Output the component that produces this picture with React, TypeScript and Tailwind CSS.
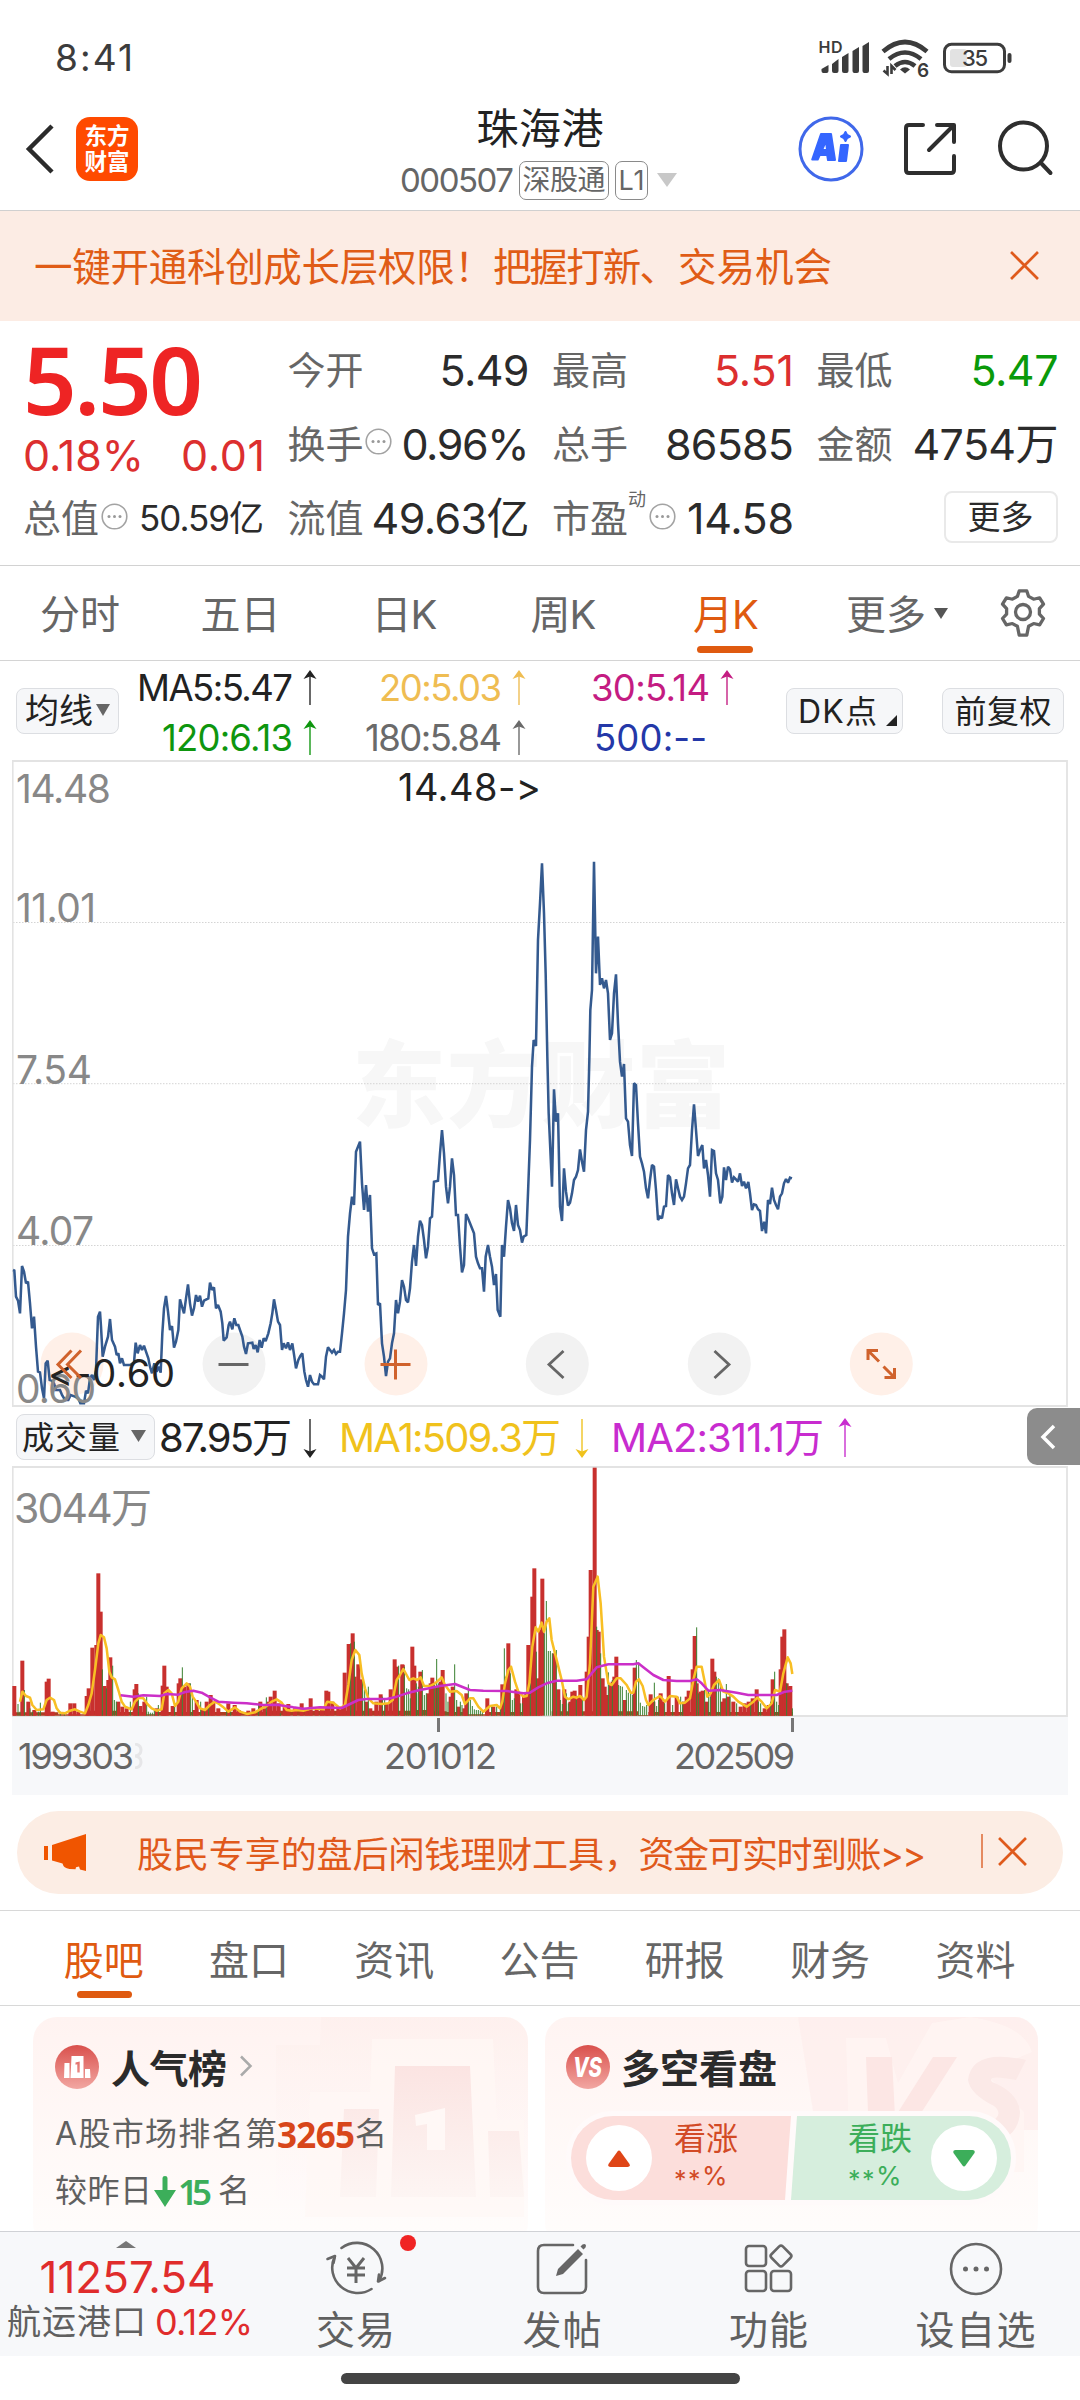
import { useLayoutEffect, useRef, useState, type ReactNode } from "react";

/** Single-line text whose tracking is adjusted so that it fills a given width. */
function Fit({ w, className = "", children }: { w: number; className?: string; children: string }) {
  const ref = useRef<HTMLSpanElement>(null);
  const [spacing, setSpacing] = useState(0);
  useLayoutEffect(() => {
    const el = ref.current;
    if (!el) return;
    const natural = el.getBoundingClientRect().width - spacing * children.length;
    setSpacing(children.length > 1 ? (w - natural) / (children.length - 1) : 0);
  }, [w, children]);
  return (
    <span className={`inline-block shrink-0 whitespace-nowrap leading-none ${className}`} style={{ width: w }}>
      <span ref={ref} style={{ letterSpacing: spacing }}>
        {children}
      </span>
    </span>
  );
}

const PRICE =
  "39,660 43,662 48,740 54,752 60,790 66,648 72,665 78,700 84,695 90,760 96,835 102,800 108,890 114,965 120,967 126,1015 132,1045 137,940 143,932 149,990 155,992 162,1000 168,1020 180,1020 186,1035 195,1050 205,1050 212,1035 225,1040 235,1045 241,1060 252,1060 258,1022 264,1030 270,985 276,975 282,990 288,960 294,800 300,785 303,830 308,920 315,890 324,860 330,807 336,870 345,890 350,915 355,910 360,940 366,925 372,945 390,945 402,938 407,878 413,910 420,885 426,900 432,887 438,905 445,925 450,950 456,970 463,940 470,965 476,950 482,968 487,850 492,775 498,738 504,785 510,840 516,828 522,893 528,875 535,840 540,748 546,770 552,790 558,745 564,703 570,760 576,797 582,775 588,735 594,755 600,737 606,770 612,752 625,745 630,698 636,720 642,712 648,775 654,765 662,785 667,820 671,872 680,862 686,825 690,815 697,838 703,805 709,825 715,825 720,840 727,860 732,890 738,912 744,880 757,878 761,897 767,885 773,907 779,870 785,893 791,865 797,873 805,850 812,820 817,790 822,748 828,780 834,815 840,825 846,900 851,880 858,895 864,877 870,900 877,880 883,920 888,955 895,930 901,918 907,910 913,965 918,990 924,1010 930,975 936,995 942,1003 954,1003 960,975 966,980 972,988 978,920 984,892 990,900 996,908 1002,900 1008,912 1014,905 1020,905 1026,850 1032,790 1038,720 1044,560 1050,490 1056,440 1062,465 1068,305 1074,290 1080,275 1086,400 1092,480 1098,405 1104,485 1110,435 1116,595 1122,613 1129,610 1134,765 1140,760 1146,880 1152,920 1158,978 1164,935 1170,925 1176,880 1182,850 1188,750 1194,790 1200,755 1206,690 1212,710 1218,750 1224,757 1230,715 1236,635 1242,585 1248,648 1254,560 1260,512 1266,525 1272,570 1278,625 1284,590 1290,505 1296,500 1302,395 1314,392 1320,310 1326,240 1332,310 1338,410 1344,460 1350,410 1356,325 1362,375 1368,495 1374,495 1380,590 1386,667 1392,645 1398,492 1404,505 1410,520 1422,550 1428,620 1434,640 1440,655 1446,655 1452,725 1457,620 1464,585 1470,620 1476,650 1482,705 1488,672 1493,780 1501,800 1506,585 1512,620 1518,530 1524,450 1530,475 1536,520 1542,543 1548,465 1554,525 1560,540 1566,578 1571,560 1579,555 1584,430 1590,270 1596,50 1601,-30 1608,-12 1614,-330 1620,-440 1626,-560 1632,-410 1637,-230 1642,20 1646,190 1656,410 1662,118 1668,215 1674,190 1680,470 1686,513 1692,355 1698,425 1704,467 1710,458 1716,430 1722,390 1728,380 1734,360 1740,298 1746,335 1752,365 1758,240 1764,185 1768,30 1771,-120 1776,-180 1782,-565 1788,-230 1794,-340 1800,-195 1806,-215 1812,-185 1818,-210 1824,-170 1830,-30 1836,-50 1842,-170 1848,-227 1854,-80 1860,35 1866,80 1872,42 1878,205 1884,215 1890,285 1896,318 1902,100 1908,105 1914,220 1920,320 1926,340 1932,365 1938,415 1944,445 1950,390 1956,345 1962,350 1968,420 1974,510 1980,500 1986,505 1992,470 1998,468 2004,375 2010,382 2016,430 2022,465 2028,388 2034,415 2040,440 2046,450 2052,440 2058,400 2064,355 2070,345 2076,240 2082,163 2088,240 2094,318 2100,300 2107,285 2112,355 2118,330 2124,375 2130,440 2136,300 2142,303 2148,370 2154,390 2161,460 2167,440 2172,352 2178,390 2184,350 2190,358 2196,398 2202,382 2208,388 2214,395 2220,370 2226,408 2232,395 2238,415 2245,396 2250,430 2256,480 2262,463 2268,465 2274,478 2280,483 2286,543 2292,515 2298,550 2304,450 2310,462 2316,413 2322,450 2328,465 2334,478 2340,440 2346,430 2352,400 2358,387 2364,398 2370,383 2376,385";

const RED_BARS =
  "43,858 67,782 85,905 103,930 140,845 146,836 158,935 211,910 223,910 235,935 260,888 266,865 277,743 289,735 295,520 302,635 314,858 325,840 331,772 355,905 367,920 380,925 404,868 409,852 421,918 433,905 470,925 488,857 493,797 500,860 518,918 536,850 541,835 553,860 565,850 583,930 590,900 608,930 620,905 632,885 640,905 655,925 685,910 704,915 716,930 745,932 760,925 781,905 793,925 806,905 812,890 824,872 836,910 854,920 865,912 885,925 905,910 920,930 932,895 950,922 966,922 979,872 985,875 997,905 1015,925 1024,920 1034,818 1046,732 1058,700 1064,830 1075,793 1082,838 1099,905 1111,925 1129,905 1142,883 1160,910 1172,868 1184,778 1190,800 1207,793 1237,740 1243,797 1261,815 1285,880 1208,795 1292,850 1297,833 1310,860 1322,845 1328,810 1352,890 1358,860 1375,920 1399,880 1393,925 1462,895 1480,920 1507,853 1525,730 1520,830 1549,868 1555,880 1572,890 1579,880 1585,735 1597,590 1603,505 1613,835 1621,690 1627,536 1663,760 1675,868 1693,868 1711,905 1717,875 1724,872 1735,888 1741,855 1760,815 1766,710 1772,510 1784,203 1790,690 1796,695 1808,835 1814,860 1820,885 1832,855 1838,845 1843,830 1849,770 1875,900 1904,803 1952,883 1960,905 1982,880 1988,905 2006,828 2030,890 2053,905 2060,890 2066,872 2078,808 2084,708 2090,850 2102,875 2108,872 2120,905 2137,776 2143,815 2167,905 2173,895 2185,890 2200,905 2222,920 2234,910 2246,905 2258,895 2270,868 2294,925 2306,915 2318,838 2342,808 2347,710 2353,688 2360,850 2365,860 2371,858";

const GREEN_BARS =
  "54,912 60,935 73,870 90,925 97,935 115,935 121,908 181,935 193,938 307,808 319,865 338,797 343,900 349,905 391,905 415,880 440,890 445,935 451,938 457,938 463,930 475,915 524,910 547,802 571,850 577,890 602,905 614,930 626,915 680,930 692,930 776,910 799,892 841,940 1052,730 1063,725 1088,840 1094,870 1105,860 1147,890 1154,900 1196,797 1213,800 1220,865 1226,868 1231,895 1249,850 1255,860 1267,810 1273,885 1279,880 1250,880 1310,777 1303,850 1315,850 1338,880 1344,905 1364,793 1370,900 1381,905 1386,915 1405,853 1411,900 1417,918 1423,928 1429,930 1435,930 1441,932 1447,934 1475,915 1490,920 1501,918 1513,745 1531,820 1537,900 1543,895 1561,910 1567,910 1591,850 1609,755 1633,700 1639,603 1645,753 1651,753 1657,760 1669,750 1681,900 1687,912 1699,880 1705,910 1729,900 1748,890 1790,680 1802,760 1825,817 1837,840 1856,855 1861,858 1867,860 1879,870 1885,878 1892,880 1898,885 1909,780 1916,790 1921,908 1928,918 1934,920 1940,915 1963,848 1970,918 1976,900 1994,910 2018,915 2042,890 2048,905 2090,682 2096,880 2114,870 2126,870 2131,890 2149,830 2155,835 2161,850 2179,852 2190,885 2210,910 2252,905 2275,905 2282,910 2312,905 2324,815 2330,905 2336,915 2360,850 2377,925";

const VOL_MA1 =
  "60,905 67,875 78,888 90,893 97,915 110,930 130,928 140,900 150,893 162,900 170,925 180,938 195,940 210,932 225,928 240,935 255,940 265,915 275,880 285,810 295,730 302,705 312,712 320,745 328,815 335,832 345,838 355,870 365,905 375,920 395,928 405,905 418,893 430,895 442,912 455,925 470,932 485,928 493,880 505,870 515,880 525,918 535,905 545,865 560,850 570,860 578,890 590,908 600,925 615,930 630,915 645,905 657,912 668,920 685,935 705,922 720,935 742,942 765,937 785,925 800,918 815,905 830,898 845,908 860,930 875,932 890,930 910,932 935,925 970,928 982,905 1000,908 1020,925 1035,915 1045,855 1055,780 1066,750 1078,765 1085,820 1095,865 1105,895 1120,910 1145,912 1165,910 1178,900 1190,840 1200,825 1210,807 1228,840 1240,835 1252,840 1262,832 1272,858 1290,858 1305,850 1325,832 1335,855 1350,875 1370,873 1385,885 1395,912 1410,895 1420,895 1435,920 1450,935 1470,918 1490,915 1500,925 1507,905 1515,850 1525,810 1533,800 1545,845 1555,875 1570,890 1580,888 1588,850 1597,740 1607,682 1615,695 1625,668 1632,695 1640,665 1648,655 1655,720 1665,760 1675,800 1685,840 1695,890 1705,898 1720,890 1730,893 1740,888 1752,900 1760,890 1770,790 1780,560 1793,530 1802,610 1812,770 1825,850 1835,855 1850,835 1862,835 1880,855 1892,878 1900,878 1908,845 1917,838 1928,858 1938,900 1945,915 1960,900 1980,888 1995,905 2010,888 2030,890 2040,910 2055,908 2070,895 2080,840 2090,800 2105,800 2115,850 2122,890 2132,880 2142,855 2157,840 2170,875 2185,880 2200,890 2215,905 2240,920 2260,905 2272,893 2285,905 2300,925 2315,910 2325,870 2340,875 2350,820 2363,772 2372,790 2377,822";

const VOL_MA2 =
  "362,886 400,890 430,886 480,888 500,882 535,884 555,876 580,872 605,878 630,892 655,905 700,908 740,910 790,915 830,914 880,922 910,926 960,922 1025,924 1050,912 1075,900 1100,897 1160,897 1190,890 1220,880 1260,870 1280,866 1320,858 1365,852 1380,858 1410,870 1450,872 1520,873 1570,880 1590,878 1615,862 1640,850 1670,842 1730,842 1760,838 1775,820 1790,802 1825,793 1900,793 1915,790 1930,802 1960,825 1990,840 2030,843 2070,843 2090,838 2105,850 2125,872 2160,870 2210,878 2245,885 2330,885 2355,875 2377,872";

const pairs = (s: string) => s.split(" ").map((p) => p.split(",").map(Number));

function StatusBar() {
  return (
    <div className="flex h-[105px] items-center pt-[10px] pl-[55px] text-[#3c3c3c]">
      <Fit w={78} className="text-[37px]">8:41</Fit>
      <svg className="ml-[683px]" width="56" height="40" viewBox="816 38 56 40" fill="#3c3c3c">
        <text x="818.5" y="53" fontSize="16" fontWeight="600" textLength="24">HD</text>
        <path d="M821.500 69l7-4v6q0 2-2 2h-3q-2 0-2-2zM832 64l6.500-5v12q0 2-2 2h-2.500q-2 0-2-2zM842 57l6.500-4v18q0 2-2 2h-2.500q-2 0-2-2zM852.500 51l6.500-4v24q0 2-2 2h-2.500q-2 0-2-2zM862.500 46l6.500-4v29q0 2-2 2h-2.500q-2 0-2-2z" />
      </svg>
      <svg className="ml-[8px]" width="52" height="50" viewBox="880 33 52 50" fill="none" stroke="#3c3c3c">
        <path d="M883 51.500Q905 32.500 927 51.500" strokeWidth="4.600" />
        <path d="M889 59Q905 46 921 59" strokeWidth="4.600" />
        <path d="M895 66Q905 58 915 66" strokeWidth="4.600" />
        <path d="M900 69.500Q905 65 910 69.500L905 73.500z" fill="#3c3c3c" stroke="none" />
        <path d="M887.500 66v8l-4-3.500M891.500 74v-8l4 4" strokeWidth="2.600" />
        <text x="917" y="76.500" fontSize="19" fontWeight="600" fill="#3c3c3c" stroke="none">6</text>
      </svg>
      <svg className="ml-[8px]" width="76" height="40" viewBox="940 37 76 40">
        <rect x="944.500" y="43.300" width="60" height="27.500" rx="7" fill="none" stroke="#3c3c3c" strokeWidth="3" />
        <rect x="950" y="48" width="17" height="18" rx="3" fill="#e2e2e2" />
        <rect x="1007.500" y="52" width="4" height="10" rx="2" fill="#3c3c3c" />
        <text x="962" y="65" fontSize="22" fontWeight="500" fill="#3c3c3c" textLength="26">35</text>
      </svg>
    </div>
  );
}

function Header() {
  return (
    <header className="flex h-[106px] items-center border-b border-[#d0d0d0] pb-[17px]">
      <svg className="ml-[21px] shrink-0" width="38" height="56" viewBox="20 121 38 56" fill="none" stroke="#2b2b2b" strokeWidth="4.500">
        <path d="M51 126L28 149l23 23" />
      </svg>
      <div className="ml-[17px] flex h-[64px] w-[62px] shrink-0 flex-col items-center justify-center rounded-[14px] bg-[#ff4a00] text-[22.500px] leading-[26.500px] font-semibold text-white">
        <span>东方</span>
        <span>财富</span>
      </div>
      <div className="mt-[3px] ml-[262px] flex w-[280px] shrink-0 flex-col items-center self-start">
        <Fit w={127} className="text-[42px] text-[#222]">珠海港</Fit>
        <div className="mt-[10px] flex h-[40px] w-full items-center text-[#666]">
          <Fit w={114} className="text-[33px]">000507</Fit>
          <span className="ml-[5px] flex h-[39px] w-[90px] shrink-0 items-center justify-center rounded-[7px] border border-[#8a8a8a]">
            <Fit w={83} className="text-[28px]">深股通</Fit>
          </span>
          <span className="ml-[6px] flex h-[39px] w-[33px] shrink-0 items-center justify-center rounded-[7px] border border-[#8a8a8a]">
            <Fit w={26} className="text-[27px]">L1</Fit>
          </span>
          <svg className="ml-[9px] shrink-0" width="20" height="14"><path d="M0 0h20L10 14z" fill="#c8c8c8" /></svg>
        </div>
      </div>
      <svg className="ml-[118px] shrink-0" width="66" height="66" viewBox="798 116 66 66">
        <circle cx="831" cy="149" r="31" fill="#fff" stroke="#4068ea" strokeWidth="3" />
        <g fill="#3566ff" stroke="#3566ff" strokeWidth="2" strokeLinejoin="round">
          <path fillRule="evenodd" d="M821 134h10l4 26h-7l-.8-5h-7.500l-2 4.500h-5.500zM826 141l-4 9h5z" />
          <path d="M841 145h7l-2 16h-7z" />
          <path d="M845.500 132l1.600 3 2.900 1.500-2.900 1.500-1.600 3-1.600-3-2.900-1.500 2.900-1.500z" />
        </g>
      </svg>
      <svg className="ml-[38px] shrink-0" width="56" height="56" viewBox="902 121 56 56" fill="none" stroke="#2e2e2e" strokeWidth="4" strokeLinecap="round" strokeLinejoin="round">
        <path d="M923 125h-14q-3 0-3 3v42q0 3 3 3h42q3 0 3-3v-14M937 125h17v17M953 126L929 150" />
      </svg>
      <svg className="ml-[37px] shrink-0" width="60" height="60" viewBox="995 119 60 60" fill="none" stroke="#2e2e2e" strokeWidth="4" strokeLinecap="round">
        <circle cx="1023.500" cy="146" r="23.500" />
        <path d="M1041 163l9.500 10" />
      </svg>
    </header>
  );
}

function Cross({ size, className = "" }: { size: number; className?: string }) {
  return (
    <svg className={`shrink-0 ${className}`} width={size} height={size} viewBox="0 0 28 28" fill="none" stroke="#df5a1c" strokeWidth="2.600">
      <path d="M1 1l26 26M27 1L1 27" />
    </svg>
  );
}

function InfoDot({ className = "" }: { className?: string }) {
  return (
    <svg className={`shrink-0 ${className}`} width="27" height="27" viewBox="0 0 27 27" fill="#999">
      <circle cx="13.500" cy="13.500" r="12.300" fill="none" stroke="#a3a3a3" strokeWidth="1.600" />
      <circle cx="8" cy="13.500" r="1.500" />
      <circle cx="13.500" cy="13.500" r="1.500" />
      <circle cx="19" cy="13.500" r="1.500" />
    </svg>
  );
}

function Cell({ label, w, value, color = "text-[#2b2b2b]", children }: { label: string; w: number; value: string; color?: string; children?: ReactNode }) {
  return (
    <div className="flex h-[74px] items-center">
      <Fit w={76} className="text-[38px] text-[#666]">{label}</Fit>
      {children}
      <Fit w={w} className={`-mr-[2px] ml-auto text-[43px] ${color}`}>{value}</Fit>
    </div>
  );
}

function Quote() {
  return (
    <section className="grid h-[245px] grid-cols-[240px_240px_240px_240px] gap-x-[24.500px] border-b border-[#d2d2d2] pt-[12px] pl-[23px]">
      <div>
        <div className="flex h-[96px] items-center">
          <Fit w={180} className="-mt-[4px] font-['Noto_Sans'] text-[94px] font-semibold text-[#ee2424]">5.50</Fit>
        </div>
        <div className="flex h-[52px] items-center justify-between text-[43px] text-[#dc2f2f]">
          <Fit w={121}>0.18%</Fit>
          <Fit w={84} className="-mr-[2px]">0.01</Fit>
        </div>
        <div className="flex h-[74px] items-center">
          <Fit w={76} className="text-[38px] text-[#666]">总值</Fit>
          <InfoDot className="-mt-[4px] ml-[2px]" />
          <Fit w={125} className="-mr-px ml-auto text-[35px] text-[#2b2b2b]">50.59亿</Fit>
        </div>
      </div>
      <div>
        <Cell label="今开" w={90} value="5.49" />
        <Cell label="换手" w={128} value="0.96%">
          <InfoDot className="-mt-[6px] ml-[1px]" />
        </Cell>
        <Cell label="流值" w={158} value="49.63亿" />
      </div>
      <div>
        <Cell label="最高" w={80} value="5.51" color="text-[#dc2f2f]" />
        <Cell label="总手" w={129} value="86585" />
        <Cell label="市盈" w={107} value="14.58">
          <span className="-mt-[36px] text-[18px] leading-none text-[#666]">动</span>
          <InfoDot className="-mt-[4px] ml-[3px]" />
        </Cell>
      </div>
      <div>
        <Cell label="最低" w={88} value="5.47" color="text-[#0a9a0a]" />
        <Cell label="金额" w={146} value="4754万" />
        <div className="flex h-[72px] items-center justify-end">
          <span className="-mr-px flex h-[52px] w-[114px] items-center justify-center rounded-[8px] border-2 border-[#e9e9e9]">
            <Fit w={66} className="text-[33px] text-[#2b2b2b]">更多</Fit>
          </span>
        </div>
      </div>
    </section>
  );
}

function PeriodTab({ cell, w, active, children }: { cell: string; w: number; active?: boolean; children: string }) {
  return (
    <div className={`relative flex h-full items-center justify-center pt-[4px] text-[40px] ${cell} ${active ? "text-[#df5a10]" : "text-[#666]"}`}>
      <Fit w={w}>{children}</Fit>
      {active && <span className="absolute bottom-[7px] left-1/2 ml-[-29px] h-[7px] w-[56px] rounded-full bg-[#df5a10]" />}
    </div>
  );
}

function Periods() {
  return (
    <nav className="flex h-[95px] items-center border-b border-[#d4d4d4]">
      <PeriodTab cell="w-[160px]" w={80}>分时</PeriodTab>
      <PeriodTab cell="w-[161px]" w={80}>五日</PeriodTab>
      <PeriodTab cell="w-[167px]" w={66}>日K</PeriodTab>
      <PeriodTab cell="w-[151px]" w={66}>周K</PeriodTab>
      <PeriodTab cell="w-[174px]" w={66} active>月K</PeriodTab>
      <div className="flex items-center pt-[4px] pl-[33px] text-[40px] text-[#666]">
        <Fit w={80}>更多</Fit>
        <svg className="mb-[4px] ml-[8px]" width="14" height="11"><path d="M0 0h14L7 11z" fill="#555" /></svg>
      </div>
      <svg className="ml-[51px]" width="48" height="50" viewBox="0 0 48 50" fill="none" stroke="#666" strokeWidth="3.300" strokeLinejoin="round">
        <path d="M20.200 2h7.600l1.800 5.800 5 2.800 6-1.400 3.900 6.600-4.100 4.600v5.800l4.100 4.600-3.900 6.600-6-1.400-5 2.800L27.800 48h-7.600l-1.800-9.200-5-2.800-6 1.400-3.900-6.600 4.100-4.600v-5.800L3.500 15.800l3.900-6.600 6 1.400 5-2.800z" transform="translate(0 1) scale(1 .96)" />
        <circle cx="24" cy="24" r="7.500" />
      </svg>
    </nav>
  );
}

function Arrow({ down, tall, color, className = "" }: { down?: boolean; tall?: boolean; color: string; className?: string }) {
  return (
    <svg className={`shrink-0 ${down ? "rotate-180" : ""} ${className}`} width="14" height={tall ? 40 : 36} viewBox={tall ? "0 0 14 40" : "0 0 14 36"}>
      <path d={tall ? "M7 3v36" : "M7 3v32"} stroke={color} strokeWidth="1.600" opacity=".85" />
      <path d="M7 0l6.500 9L7 6.500.5 9z" fill={color} />
    </svg>
  );
}

function Ma({ w, color, hex, children }: { w: number; color: string; hex: string; children: string }) {
  return (
    <div className={`flex items-center justify-end text-[36.500px] ${color}`}>
      <Fit w={w}>{children}</Fit>
      {hex ? <Arrow color={hex} className="ml-[10px]" /> : <span className="w-[27px]" />}
    </div>
  );
}

function Averages() {
  return (
    <div className="flex h-[99px] items-center text-[#222]">
      <span className="ml-[16px] flex h-[46px] w-[103px] items-center rounded-[8px] border border-[#dcdee2] bg-[#f6f7f9] pl-[8px]">
        <Fit w={68} className="text-[34px]">均线</Fit>
        <svg className="mb-[2px] ml-[3px]" width="14" height="12"><path d="M0 0h14L7 12z" fill="#666" /></svg>
      </span>
      <div className="mt-[3px] grid h-[100px] grid-cols-[198px_209px_208px] grid-rows-[50px_50px] pt-[1px]">
        <Ma w={156} color="text-[#222]" hex="#222222">MA5:5.47</Ma>
        <Ma w={123} color="text-[#efbd52]" hex="#efbd52">20:5.03</Ma>
        <Ma w={119} color="text-[#c41c82]" hex="#c41c82">30:5.14</Ma>
        <Ma w={131} color="text-[#0e960e]" hex="#0e960e">120:6.13</Ma>
        <Ma w={137} color="text-[#6a6a6a]" hex="#6a6a6a">180:5.84</Ma>
        <Ma w={113} color="text-[#2438a8]" hex="">500:--</Ma>
      </div>
      <span className="ml-[52px] flex h-[46px] w-[117px] items-center rounded-[8px] border border-[#dcdee2] bg-[#f6f7f9] pt-[2px] pl-[11px]">
        <Fit w={79} className="text-[32px]">DK点</Fit>
        <svg className="mt-[18px] ml-[9px]" width="11" height="11"><path d="M11 0v11H0z" fill="#222" /></svg>
      </span>
      <span className="ml-[39px] flex h-[46px] w-[122px] items-center justify-center rounded-[8px] border border-[#dcdee2] bg-[#f6f7f9] pt-[2px]">
        <Fit w={97} className="text-[32px]">前复权</Fit>
      </span>
    </div>
  );
}

function PriceChart() {
  const labels: [string, number, number][] = [
    ["14.48", 803, 95],
    ["11.01", 922, 80],
    ["7.54", 1084, 76],
    ["4.07", 1245, 78],
    ["0.60", 1403, 80],
  ];
  return (
    <svg className="ml-[12px] block" width="1056" height="647" viewBox="12 760 1056 647">
      <text x="352" y="1120" fontSize="94" fontWeight="900" fill="#f7f7f7" textLength="378">东方财富</text>
      {[922.5, 1083.7, 1245.5].map((y) => (
        <path key={y} d={`M13 ${y}H1067`} stroke="#d4d4d4" strokeDasharray="1.500 1.500" />
      ))}
      <path d="M12 761H1067V1406H12.700V761" fill="none" stroke="#e3e3e3" strokeWidth="1.800" />
      {[72, 234, 396, 557.3, 719.3, 881.3].map((x, i) => (
        <circle key={x} cx={x} cy="1364" r="31.500" fill={[0, 2, 5].includes(i) ? "#fff0e8" : "#f2f2f2"} />
      ))}
      <g transform="translate(0 1050) scale(.333333)">
        <polyline points={PRICE} fill="none" stroke="#345a8f" strokeWidth="7.600" strokeLinejoin="miter" strokeMiterlimit="2" />
      </g>
      <g fontSize="39" fill="#888">
        {labels.map(([t, y, w]) => (
          <text key={t} x="16" y={y} textLength={w}>{t}</text>
        ))}
      </g>
      <text x="398" y="801" fontSize="38" fill="#222" textLength="143">14.48-&gt;</text>
      <text x="48" y="1387" fontSize="38" fill="#222" textLength="127">&lt;-0.60</text>
      <g fill="none" stroke="#d0622c" strokeWidth="3">
        <path d="M71.500 1350.500L58 1364.500l13.500 13.500M81 1350.500L67.500 1364.500 81 1378" />
        <path d="M380.500 1364.500h30M395.500 1349.500v30" strokeWidth="3" />
        <path d="M868 1360v-9.500h10M868.500 1351l10.500 10.500M894.500 1368v9.500h-10M894 1377l-10.500-10.500" />
      </g>
      <g fill="none" stroke="#666" strokeWidth="2.800">
        <path d="M218.500 1364.500h30" strokeWidth="3" />
        <path d="M563.500 1351L549 1364.500l14.500 13.500M714.500 1351l14.500 13.500-14.500 13.500" />
      </g>
    </svg>
  );
}

function VolumeHeader() {
  return (
    <div className="flex h-[59px] items-center pt-[2px] text-[40px]">
      <span className="-mt-[2px] ml-[16px] flex h-[46px] w-[139px] items-center rounded-[8px] border border-[#dcdee2] bg-[#f6f7f9] pt-[2px] pl-[5px]">
        <Fit w={98} className="text-[32px] text-[#222]">成交量</Fit>
        <svg className="mb-[4px] ml-[11px]" width="15" height="12"><path d="M0 0h15L7.500 12z" fill="#666" /></svg>
      </span>
      <Fit w={133} className="ml-[4px] text-[#222]">87.95万</Fit>
      <Arrow down tall color="#222222" className="ml-[11px]" />
      <Fit w={222} className="ml-[22px] text-[#f0c21c]">MA1:509.3万</Fit>
      <Arrow down tall color="#f0c21c" className="ml-[14px]" />
      <Fit w={213} className="ml-[22px] text-[#c82ccf]">MA2:311.1万</Fit>
      <Arrow tall color="#c82ccf" className="ml-[14px]" />
      <span className="-mt-[2px] ml-auto flex h-[57px] w-[53px] items-center rounded-l-[10px] bg-[#8c8c8c] pl-[13px]">
        <svg width="16" height="26" viewBox="0 0 16 26" fill="none" stroke="#fff" strokeWidth="3.500"><path d="M14 2L3 13l11 11" /></svg>
      </span>
    </div>
  );
}

function VolumeChart() {
  return (
    <svg className="ml-[12px] block" width="1056" height="251" viewBox="12 1466 1056 251">
      <path d="M12 1467H1067V1716H12.700V1467" fill="none" stroke="#e3e3e3" strokeWidth="1.800" />
      <g transform="translate(0 1400) scale(.333333)">
        <path d="M39 937H175V943H255V932H350V936H440V943H465V936H800V932H1240V930H1290V934H1340V936H1400V943H1455V936H1620V947H39z" fill="#ae3d22" />
        <path d="M1655 934H1915V945H1945V936H2378V947H1655z" fill="#ae3d22" />
        {pairs(RED_BARS).map(([x, y], i) => (
          <rect key={i} x={x - 6} y={y} width="12" height={947 - y} fill="#c8302e" />
        ))}
        {pairs(GREEN_BARS).map(([x, y], i) => (
          <rect key={i} x={x - 1.5} y={y} width="3" height={947 - y} fill="#3a8030" />
        ))}
        <polyline points={VOL_MA1} fill="none" stroke="#f8bf24" strokeWidth="7.600" strokeLinejoin="round" />
        <polyline points={VOL_MA2} fill="none" stroke="#cb2fc8" strokeWidth="7.600" strokeLinejoin="round" />
      </g>
      <text x="14" y="1523" fontSize="41" fill="#888" textLength="138">3044万</text>
    </svg>
  );
}

function DateAxis() {
  return (
    <div className="relative ml-[12px] flex h-[78px] w-[1056px] items-center bg-[#f7f8fa] text-[36px] text-[#666]">
      <Fit w={116} className="ml-[6px]">199303</Fit>
      <svg className="ml-px" width="8" height="26" viewBox="0 0 8 26" fill="none" stroke="#e6e6e8" strokeWidth="3">
        <path d="M0 1q6 1 6 6t-6 6q6 1 6 6t-6 6" />
      </svg>
      <Fit w={113} className="ml-[241px]">201012</Fit>
      <Fit w={121} className="ml-[177px]">202509</Fit>
      <span className="absolute top-px left-[425px] h-[14px] w-[3px] bg-[#777]" />
      <span className="absolute top-px left-[779px] h-[14px] w-[3px] bg-[#777]" />
    </div>
  );
}

function Promo() {
  return (
    <div className="mt-[16px] ml-[17px] flex h-[83px] w-[1046px] items-center rounded-full bg-[#fcede4] pt-[5px] text-[36px] text-[#e0591b]">
      <svg className="-mt-[5px] ml-[27px]" width="43" height="38" viewBox="0 0 43 38" fill="#f05500">
        <path d="M0 12h4v14H0zM8 11L42 0v37l-6-1.500-1-3-3 .8-.5 2-6-.2q-6-1-7-5.500L8 26.500z" />
      </svg>
      <div className="ml-[50px] flex">
        <Fit w={467}>股民专享的盘后闲钱理财工具</Fit>
        <Fit w={322}>，资金可实时到账&gt;&gt;</Fit>
      </div>
      <span className="-mt-[8px] ml-[55px] h-[34px] w-[1.500px] bg-[#e58a60]" />
      <Cross size={29} className="-mt-[8px] ml-[15px]" />
    </div>
  );
}

function SectionTabs() {
  const tabs = ["股吧", "盘口", "资讯", "公告", "研报", "财务", "资料"];
  return (
    <nav className="mt-[16px] flex h-[96px] border-y border-[#d8d8d8] pl-[31px]">
      {tabs.map((t, i) => (
        <div key={t} className={`relative flex w-[145.300px] items-center justify-center pt-[5px] text-[40px] ${i === 0 ? "text-[#df5a10]" : "text-[#666]"}`}>
          <Fit w={80}>{t}</Fit>
          {i === 0 && <span className="absolute bottom-[7px] left-[46px] h-[7px] w-[55px] rounded-full bg-[#df5a10]" />}
        </div>
      ))}
    </nav>
  );
}

function RankCard() {
  return (
    <div className="relative h-[230px] w-[495px] overflow-hidden rounded-[24px] bg-linear-to-b from-[#fff3f1] to-[#fffdfc] pl-[22px]">
      <svg className="absolute inset-0" width="495" height="214" viewBox="33 2017 495 214">
        <defs>
          <linearGradient id="pedestal" x1="0" y1="0" x2="0" y2="1">
            <stop offset="0" stopColor="#fbe4e2" />
            <stop offset="1" stopColor="#fdf5f3" />
          </linearGradient>
          <linearGradient id="halo" x1="0" y1="0" x2="0" y2="1">
            <stop offset="0" stopColor="#fdeeeb" />
            <stop offset="1" stopColor="#fffafa" />
          </linearGradient>
        </defs>
        <path d="M321 2017H528V2200H276V2045H320z" fill="url(#halo)" opacity=".55" />
        <path d="M372 2039H493L497 2120H524V2217H305L310 2092H370z" fill="#fff8f5" opacity=".7" />
        <path d="M395 2066H470L476 2197H391zM344 2109H379L376 2197H340zM488 2131H519L524 2197H490z" fill="url(#pedestal)" />
        <path d="M415 2115l30-7v42h-18v-26l-11 2z" fill="#fff8f6" />
      </svg>
      <div className="relative flex h-[100px] items-center">
        <svg width="44" height="44" viewBox="0 0 44 44">
          <defs>
            <linearGradient id="badge" x1="0" y1="0" x2="0" y2="1">
              <stop offset="0" stopColor="#d9504c" />
              <stop offset="1" stopColor="#f2a7a2" />
            </linearGradient>
          </defs>
          <circle cx="22" cy="22" r="22" fill="url(#badge)" />
          <path fillRule="evenodd" d="M16.500 11h12v22h-13zM20.500 17.500v2.300l1.800-.5v8.200h2.400v-11zM9.500 18h5v15h-5.500zM30 24h5l.5 9H30z" fill="#fff" />
        </svg>
        <Fit w={116} className="mt-[2px] ml-[12px] text-[39px] font-semibold text-[#2b2b2b]">人气榜</Fit>
        <svg className="-mt-[2px] ml-[12px]" width="14" height="22" viewBox="0 0 14 22" fill="none" stroke="#aaa" strokeWidth="2.500"><path d="M2 1.500l9.500 9.500L2 20.500" /></svg>
      </div>
      <div className="relative flex h-[34px] items-center text-[32px] text-[#606060]">
        <Fit w={222}>A股市场排名第</Fit>
        <Fit w={78} className="font-['Noto_Sans'] text-[35px] font-bold text-[#d8461a]">3265</Fit>
        <Fit w={32}>名</Fit>
      </div>
      <div className="relative mt-[23px] flex h-[34px] items-center text-[32px] text-[#606060]">
        <Fit w={97}>较昨日</Fit>
        <svg className="ml-[2px]" width="22" height="31" viewBox="0 0 22 31" fill="#3cae5a"><path d="M8.500 2q0-2 2.500-2t2.500 2v12H22L11 31 0 14h8.500z" /></svg>
        <Fit w={34} className="ml-[2px] font-['Noto_Sans'] text-[35px] font-semibold text-[#3cae5a]">15</Fit>
        <Fit w={32} className="ml-[6px]">名</Fit>
      </div>
    </div>
  );
}

function Masked() {
  return (
    <span className="mt-[3px] flex items-center text-[26px] leading-none">
      <span className="mt-[9px] w-[28px] text-[25px] leading-none tracking-[1.500px]">**</span>%
    </span>
  );
}

function VoteCard() {
  return (
    <div className="relative h-[230px] w-[493px] overflow-hidden rounded-[24px] bg-linear-to-b from-[#fff4f2] to-[#fffdfc] pl-[21px]">
      <svg className="absolute inset-0" width="493" height="214" viewBox="545 2017 493 214">
        <path d="M798 2017H1038V2130H816z" fill="#fdeeec" opacity=".75" />
        <path d="M846 2038h40l12 45 34-60 38-6q54 8 62 35l-48 20 40 40v60H850z" fill="#fff5f3" opacity=".8" />
        <path d="M866 2057h26l3 60 38-60h24l-54 84h-34z" fill="#fce6e4" />
        <path d="M1026 2060q-54-12-58 20 2 14 26 26 12 10-8 18l-28-2v22q60 6 62-32-2-20-28-30-6-8 24-2z" fill="#fbe9e7" />
      </svg>
      <div className="relative flex h-[100px] items-center">
        <svg width="44" height="44" viewBox="0 0 44 44">
          <circle cx="22" cy="22" r="22" fill="url(#badge)" />
          <text x="7" y="32" fontSize="27" fontWeight="800" fontStyle="italic" fill="#fff" textLength="29" lengthAdjust="spacingAndGlyphs">VS</text>
        </svg>
        <Fit w={156} className="mt-[2px] ml-[11px] text-[39px] font-semibold text-[#2b2b2b]">多空看盘</Fit>
      </div>
      <div className="relative -mt-[6px] flex h-[94px] w-[450px] rounded-full border-[5px] border-[#fffafa] bg-[#fffafa]">
        <div className="flex w-[220px] items-center rounded-l-full bg-[#fcdedb] pl-[15px] text-[#d24a26] [clip-path:polygon(0_0,100%_0,calc(100%-6px)_100%,0_100%)]">
          <span className="flex size-[66px] items-center justify-center rounded-full bg-white">
            <svg width="22" height="17"><path d="M9.500 1.500q1.500-2 3 0L21.500 14q1 3-2 3h-17q-3 0-2-3z" fill="#df4517" /></svg>
          </span>
          <div className="ml-[22px]">
            <Fit w={64} className="block text-[32px]">看涨</Fit>
            <Masked />
          </div>
        </div>
        <div className="flex flex-1 items-center rounded-r-full bg-[#d6eedd] pl-[57px] text-[#3cae5a] [clip-path:polygon(6px_0,100%_0,100%_100%,0_100%)]">
          <div>
            <Fit w={64} className="block text-[32px]">看跌</Fit>
            <Masked />
          </div>
          <span className="ml-[19px] flex size-[66px] items-center justify-center rounded-full bg-white">
            <svg className="rotate-180" width="22" height="17"><path d="M9.500 1.500q1.500-2 3 0L21.500 14q1 3-2 3h-17q-3 0-2-3z" fill="#3cae5a" /></svg>
          </span>
        </div>
      </div>
    </div>
  );
}

function NavItem({ cell, w, label, children }: { cell: string; w: number; label: string; children: ReactNode }) {
  return (
    <div className={`relative flex flex-col items-center pt-[5px] text-[39px] text-[#606060] ${cell}`}>
      <svg width="64" height="64" viewBox="0 0 64 64" fill="none" stroke="#666" strokeWidth="2.600" strokeLinecap="round" strokeLinejoin="round">
        {children}
      </svg>
      <Fit w={w} className="mt-[9px]">{label}</Fit>
    </div>
  );
}

function BottomNav() {
  return (
    <nav className="relative flex h-[125px] border-t border-[#d0d2d6] bg-[#f7f8fa]">
      <div className="flex w-[252px] flex-col items-center pt-[9px] text-[#e02c2c]">
        <svg width="20" height="7"><path d="M10 0l10 7H0z" fill="#777" /></svg>
        <Fit w={176} className="mt-[7px] ml-[3px] text-[44px]">11257.54</Fit>
        <div className="mt-[5px] flex w-full items-center pl-[7px]">
          <Fit w={139} className="text-[34px] text-[#606060]">航运港口</Fit>
          <Fit w={98} className="ml-[9px] text-[36px]">0.12%</Fit>
        </div>
      </div>
      <NavItem cell="w-[207px]" w={79} label="交易">
        <path d="M17.500 11A25.500 25.500 0 0 1 55 44M47.500 52A25.500 25.500 0 0 1 10.500 20" />
        <path d="M3.500 22l7.500-3-1.500 7M61 41l-7 3.500 1-7" />
        <path d="M24 21l8 10 8-10M32 31v15M23 31h18M23 38h18" strokeWidth="3" strokeLinecap="butt" />
      </NavItem>
      <NavItem cell="w-[206px]" w={79} label="发帖">
        <path d="M43 8H14q-6 0-6 6v36q0 6 6 6h36q6 0 6-6V23" />
        <path d="M26 39l2-7 20-20 5 5-20 20zM50.500 9.500l2-2q2-1 3 0t0 3l-2 2z" fill="#666" stroke="none" />
      </NavItem>
      <NavItem cell="w-[207px]" w={79} label="功能">
        <rect x="9" y="9" width="20" height="20" rx="3" />
        <rect x="9" y="34" width="20" height="20" rx="3" />
        <rect x="34" y="34" width="20" height="20" rx="3" />
        <rect x="36" y="11" width="16" height="16" rx="2.500" transform="rotate(45 44 19)" />
      </NavItem>
      <NavItem cell="w-[207px]" w={120} label="设自选">
        <circle cx="32" cy="32" r="25" />
        <g fill="#666" stroke="none">
          <circle cx="21.500" cy="32" r="2.500" />
          <circle cx="32" cy="32" r="2.500" />
          <circle cx="42.500" cy="32" r="2.500" />
        </g>
      </NavItem>
      <span className="absolute top-[3px] left-[400px] size-[16px] rounded-full bg-[#f02424]" />
    </nav>
  );
}

export default function App() {
  return (
    <div className="h-[2400px] w-[1080px] overflow-hidden bg-white font-['Inter','Noto_Sans_CJK_SC',sans-serif] [font-feature-settings:'calt'_0]">
      <StatusBar />
      <Header />
      <div className="flex h-[110px] items-center bg-[#fcece4] pt-[3px] pl-[34px] text-[38.500px] text-[#e05c16]">
        <Fit w={459}>一键开通科创成长层权限！</Fit>
        <Fit w={185}>把握打新、</Fit>
        <Fit w={154}>交易机会</Fit>
        <Cross size={29} className="-mt-[4px] ml-[178px]" />
      </div>
      <Quote />
      <Periods />
      <Averages />
      <PriceChart />
      <VolumeHeader />
      <VolumeChart />
      <DateAxis />
      <Promo />
      <SectionTabs />
      <div className="flex h-[225px] gap-[17px] overflow-hidden pt-[11px] pl-[33px]">
        <RankCard />
        <VoteCard />
      </div>
      <BottomNav />
      <div className="flex justify-center pt-[17px]">
        <span className="h-[11px] w-[399px] rounded-full bg-[#444]" />
      </div>
    </div>
  );
}
